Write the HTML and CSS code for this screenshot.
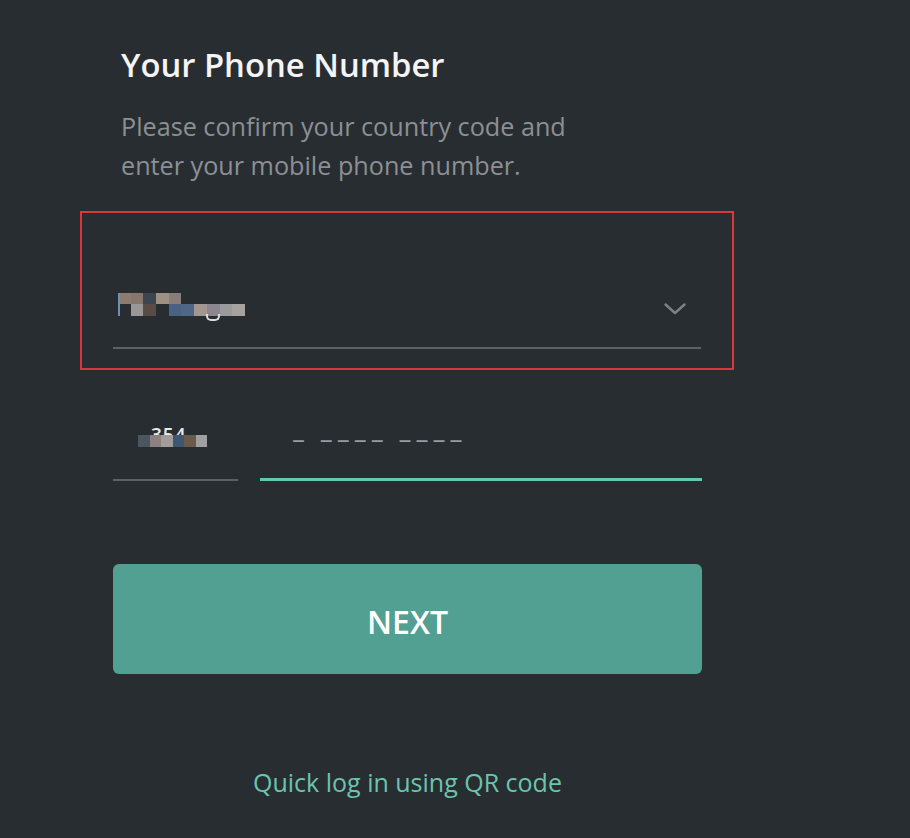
FILE: index.html
```html
<!DOCTYPE html>
<html lang="en">
<head>
<meta charset="utf-8">
<title>Your Phone Number</title>
<link rel="stylesheet" href="styles.css">
</head>
<body>
<main class="login">
  <header class="intro">
    <h1 class="title">Your Phone Number</h1>
    <p class="subtitle">Please confirm your country code and<br>enter your mobile phone number.</p>
  </header>

  <div class="highlight">
    <div class="country-field">
      <div class="mosaic country-mosaic" aria-label="Country">
        <span class="m a1"></span><span class="m a2"></span><span class="m a3"></span><span class="m a4"></span><span class="m a5"></span><span class="m bg"></span><span class="m bg"></span><span class="m bg"></span><span class="m bg"></span><span class="m bg"></span>
        <span class="m bg"></span><span class="m b1"></span><span class="m b2"></span><span class="m bg"></span><span class="m b3"></span><span class="m b4"></span><span class="m b5"></span><span class="m b6"></span><span class="m b7"></span><span class="m b8"></span>
        <span class="hook"></span>
        <span class="bracket"></span>
      </div>
      <svg class="chevron" width="24" height="14" viewBox="0 0 24 14" aria-hidden="true">
        <polyline points="2.5,2.5 12,11 21.5,2.5" fill="none" stroke="#7d8286" stroke-width="2.4" stroke-linecap="round" stroke-linejoin="round"/>
      </svg>
    </div>
  </div>

  <div class="phone-row">
    <div class="code-field">
      <div class="mosaic code-mosaic" aria-label="Code">
        <span class="digits">354</span>
        <span class="k k1"></span><span class="k k2"></span><span class="k k3"></span><span class="k k4"></span><span class="k k5"></span><span class="k k6"></span>
      </div>
    </div>
    <div class="number-field">
      <span class="placeholder">– –––– ––––</span>
    </div>
  </div>

  <button class="next" type="button">NEXT</button>

  <a class="qr-link" href="#">Quick log in using QR code</a>
</main>
</body>
</html>
```

FILE: styles.css
```css
html, body {
  margin: 0;
  padding: 0;
  background: #282d32;
  height: 100%;
}

body {
  font-family: "Open Sans", "Noto Sans", "Liberation Sans", sans-serif;
  color: #f2f2f2;
  overflow: hidden;
}

.login {
  width: 589px;
  margin-left: 113px;
  padding-top: 45px;
  display: flex;
  flex-direction: column;
}

.intro {
  padding-left: 8px;
}

.title {
  margin: 0;
  font-size: 32.8px;
  font-weight: 600;
  line-height: 40px;
  color: #f4f4f4;
}

.subtitle {
  margin: 22px 0 0;
  font-size: 25.2px;
  line-height: 39px;
  color: #8c9095;
}

.highlight {
  margin: 26px -32px 0 -33px;
  border: 2px solid #d8383b;
  padding: 0 31px 19px 31px;
}

.country-field {
  height: 136px;
  border-bottom: 2px solid #5c6166;
  display: flex;
  align-items: flex-end;
  justify-content: space-between;
  padding-bottom: 30px;
  box-sizing: border-box;
}

.mosaic {
  position: relative;
}

.country-mosaic {
  display: grid;
  grid-template-columns: repeat(10, 12.7px);
  grid-template-rows: 11px 12px;
  margin-left: 5px;
  margin-bottom: 1px;
}

.m.a1 { background: #8c7b6f; }
.m.a2 { background: #86766c; }
.m.a3 { background: #3b4651; }
.m.a4 { background: #a09083; }
.m.a5 { background: #887d7b; }
.m.bg { background: transparent; }
.m.b1 { background: #999896; }
.m.b2 { background: #5a4c44; }
.m.b3 { background: #4a6281; }
.m.b4 { background: #4f6684; }
.m.b5 { background: #a19790; }
.m.b6 { background: #8b8690; }
.m.b7 { background: #9a9a9e; }
.m.b8 { background: #a6a2a0; }

.hook {
  position: absolute;
  left: 88px;
  top: 21px;
  width: 10px;
  height: 5px;
  border: 2px solid #dcdcdc;
  border-top: none;
  border-radius: 0 0 5px 5px;
}

.bracket {
  position: absolute;
  left: 0;
  top: 0;
  width: 2px;
  height: 23px;
  background: #6f8fb3;
}

.chevron {
  margin-right: 14px;
  margin-bottom: 1px;
}

.phone-row {
  display: flex;
  gap: 22px;
  margin-top: 19px;
  height: 92px;
}

.code-field {
  width: 125px;
  border-bottom: 2px solid #5c6166;
  display: flex;
  align-items: flex-end;
  padding-bottom: 32px;
  box-sizing: border-box;
}

.code-mosaic {
  display: flex;
  margin-left: 25px;
  height: 12px;
}

.k {
  position: relative;
  width: 11.5px;
  height: 12px;
}
.k1 { background: #4a5560; }
.k2 { background: #8c8080; }
.k3 { background: #a19d98; }
.k4 { background: #3e5672; }
.k5 { background: #6a5a4a; }
.k6 { background: #a0a0a0; }

.digits {
  position: absolute;
  left: 13px;
  top: -10px;
  font-size: 19px;
  line-height: 20px;
  letter-spacing: 1px;
  color: #e8e8e8;
  font-weight: 600;
}

.number-field {
  flex: 1;
  border-bottom: 3px solid #62c8b3;
  display: flex;
  align-items: flex-end;
  padding-left: 32px;
  padding-bottom: 25px;
  box-sizing: border-box;
}

.placeholder {
  font-size: 26px;
  line-height: 30px;
  letter-spacing: 4px;
  color: #9a9ea2;
}

.next {
  margin-top: 83px;
  height: 110px;
  border: none;
  border-radius: 6px;
  background: #52a092;
  color: #ffffff;
  font-family: inherit;
  font-size: 32px;
  font-weight: 600;
  padding: 4px 0 0;
  cursor: pointer;
}

.qr-link {
  margin-top: 93px;
  align-self: center;
  font-size: 25px;
  line-height: 30px;
  color: #6cc4ae;
  text-decoration: none;
}
```
